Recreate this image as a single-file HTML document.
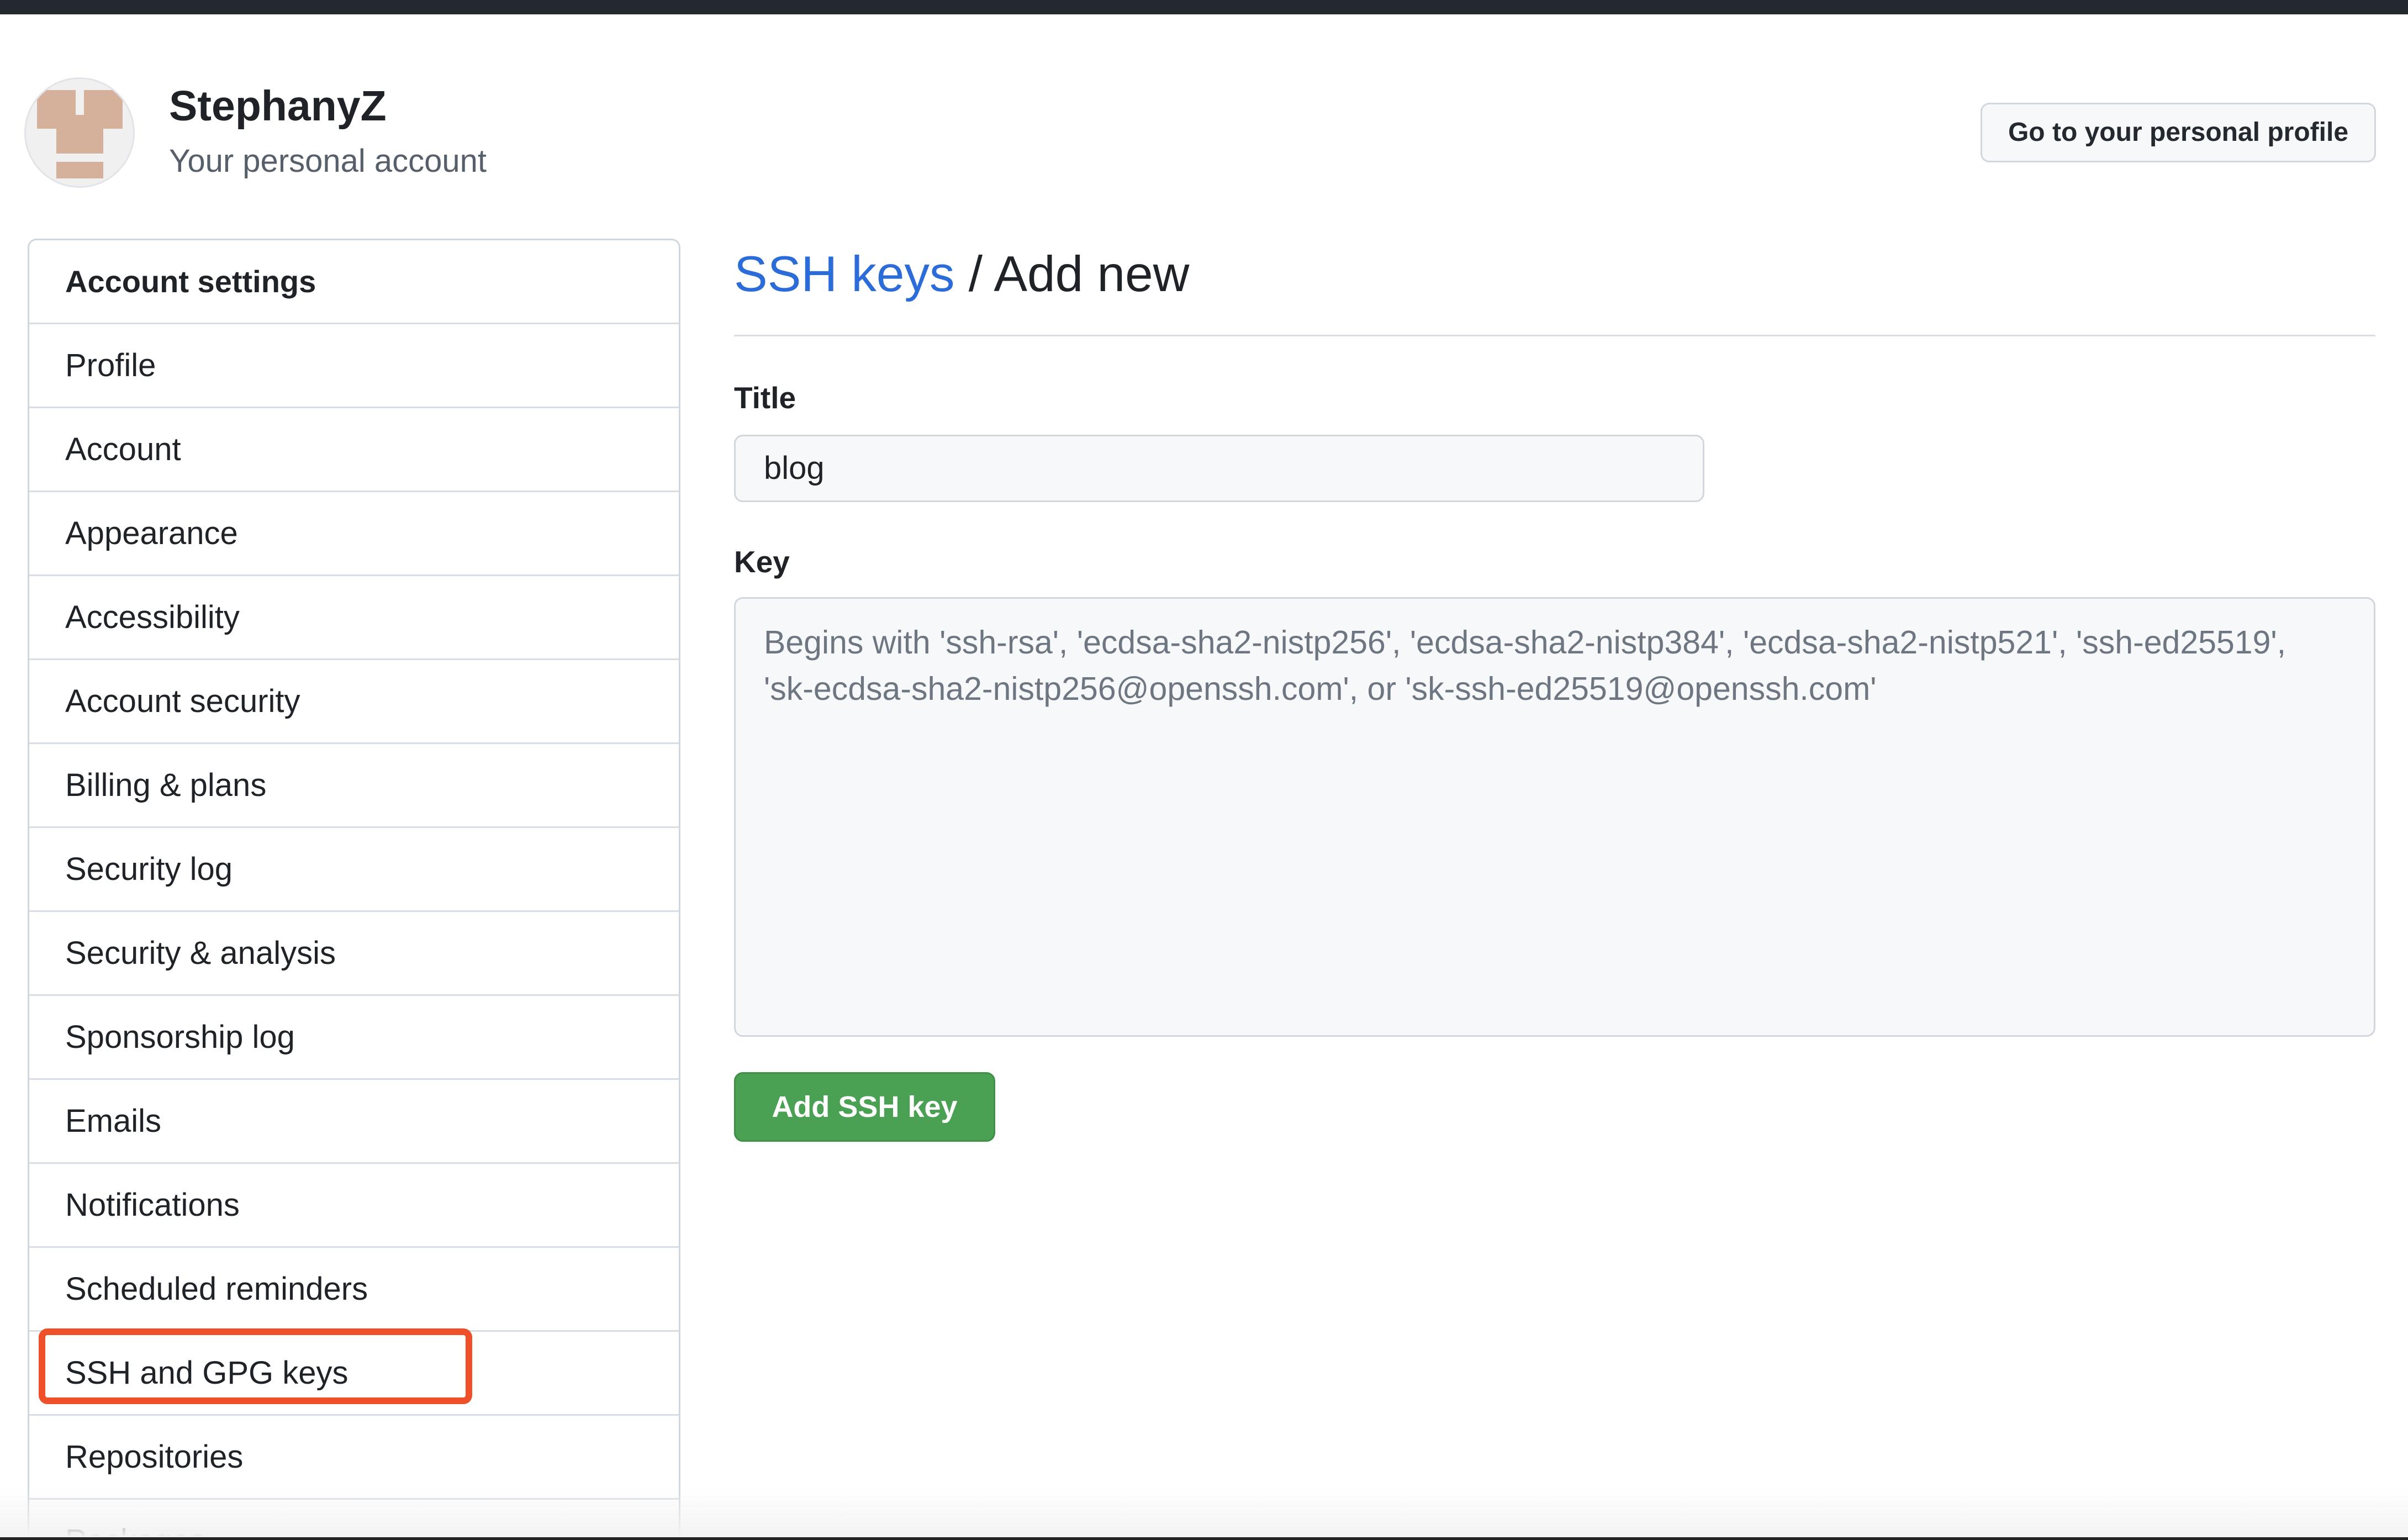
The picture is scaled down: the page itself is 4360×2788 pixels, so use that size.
<!DOCTYPE html>
<html style="width:4360px;height:2788px;overflow:hidden"><head><meta charset="utf-8"><style>
*{box-sizing:border-box;margin:0;padding:0}
body{width:4360px;height:2788px;background:#fff;font-family:"Liberation Sans",Arial,sans-serif;color:#1f2328;position:relative;overflow:hidden}
.abs{position:absolute}
.top{left:0;top:0;width:4360px;height:26px;background:#24292f}
.av{left:44px;top:140px;width:200px;height:200px;border-radius:50%;background:#f0f0f0;border:3px solid #e1e4e8;overflow:hidden}
.av i{position:absolute;background:#d5b09a}
.name{left:306px;top:148px;font-size:77px;font-weight:bold;color:#1f2328}
.sub{left:306px;top:258px;font-size:58px;color:#57606a}
.btn{left:3586px;top:186px;width:716px;height:108px;border:3px solid #d0d7de;border-radius:16px;background:#f6f8fa;font-size:48px;font-weight:bold;text-align:center;line-height:102px;color:#24292f}
.side{left:50px;top:432px;width:1182px;height:2380px;border:3px solid #d0d7de;border-radius:16px;background:#fff;overflow:hidden}
.row{height:152px;border-bottom:3px solid #d8dee4;padding-left:65px;font-size:58px;line-height:149px;color:#1f2328;white-space:nowrap}
.row.h{font-weight:bold;font-size:56px}
.red{left:70px;top:2405px;width:785px;height:137px;border:12px solid #ee5129;border-radius:16px}
.h1{left:1329px;top:445px;font-size:91px;color:#1f2328;white-space:nowrap}
.h1 span{color:#2b6cd9}
.rule{left:1329px;top:606px;width:2972px;height:3px;background:#d8dee4}
.lbl{left:1329px;font-size:55px;font-weight:bold}
.inp{left:1329px;top:787px;width:1757px;height:122px;background:#f6f8fa;border:3px solid #d0d7de;border-radius:16px;font-size:58px;padding-left:51px;line-height:116px}
.ta{left:1329px;top:1081px;width:2972px;height:796px;background:#f6f8fa;border:3px solid #d0d7de;border-radius:16px;padding:37px 51px;font-size:59px;line-height:84px;color:#6e7781;white-space:nowrap}
.go{left:1329px;top:1941px;width:473px;height:126px;background:#4aa153;border:3px solid #3f8f47;border-radius:16px;color:#fff;font-size:54px;font-weight:bold;text-align:center;line-height:120px}
.fade{left:0;top:2690px;width:4360px;height:93px;background:linear-gradient(#fff0,#f3f3f3)}
.bot{left:0;top:2783px;width:4360px;height:5px;background:#222}
</style></head><body>
<div class="abs top"></div>
<div class="abs av"><i style="left:20px;top:20px;width:70px;height:65px"></i><i style="left:105px;top:20px;width:70px;height:65px"></i><i style="left:20px;top:65px;width:155px;height:25px"></i><i style="left:55px;top:85px;width:85px;height:50px"></i><i style="left:55px;top:150px;width:85px;height:30px"></i></div>
<div class="abs name">StephanyZ</div>
<div class="abs sub">Your personal account</div>
<div class="abs btn">Go to your personal profile</div>
<div class="abs side">
<div class="row h">Account settings</div>
<div class="row">Profile</div>
<div class="row">Account</div>
<div class="row">Appearance</div>
<div class="row">Accessibility</div>
<div class="row">Account security</div>
<div class="row">Billing &amp; plans</div>
<div class="row">Security log</div>
<div class="row">Security &amp; analysis</div>
<div class="row">Sponsorship log</div>
<div class="row">Emails</div>
<div class="row">Notifications</div>
<div class="row">Scheduled reminders</div>
<div class="row">SSH and GPG keys</div>
<div class="row">Repositories</div>
<div class="row">Packages</div>
</div>
<div class="abs red"></div>
<div class="abs h1"><span>SSH keys</span> / Add new</div>
<div class="abs rule"></div>
<div class="abs lbl" style="top:688px">Title</div>
<div class="abs inp">blog</div>
<div class="abs lbl" style="top:985px">Key</div>
<div class="abs ta">Begins with 'ssh-rsa', 'ecdsa-sha2-nistp256', 'ecdsa-sha2-nistp384', 'ecdsa-sha2-nistp521', 'ssh-ed25519',<br>'sk-ecdsa-sha2-nistp256@openssh.com', or 'sk-ssh-ed25519@openssh.com'</div>
<div class="abs go">Add SSH key</div>
<div class="abs fade"></div>
<div class="abs bot"></div>
</body></html>
